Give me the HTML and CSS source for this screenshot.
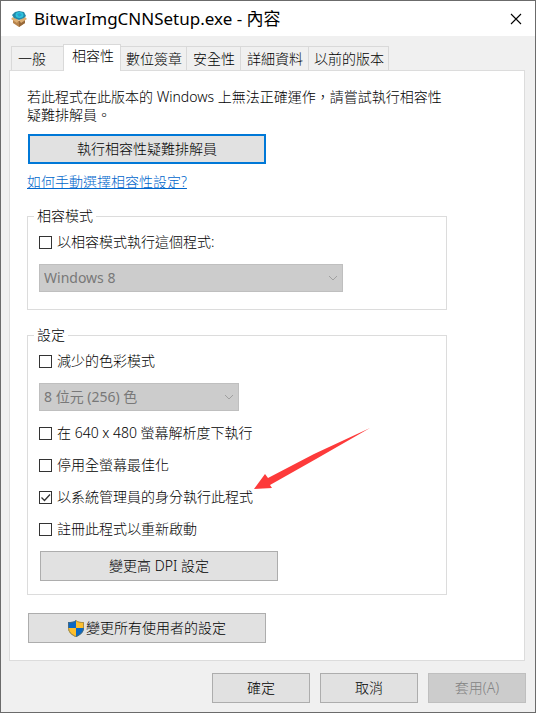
FILE: index.html
```html
<!DOCTYPE html>
<html lang="zh-Hant">

<head>
  <meta charset="UTF-8">
  <meta name="viewport" content="width=device-width, initial-scale=1.0">
  <title>BitwarImgCNNSetup.exe - 內容</title>
  <link rel="stylesheet" href="styles.css">
</head>

<body>
  <div class="window">
    <header class="titlebar">
      <svg class="app-icon" width="16" height="16" viewBox="0 0 16 16" aria-hidden="true">
        <path d="M2 7l6 3 6-3v5l-6 4-6-4z" fill="#b8844c" />
        <path d="M8 10l6-3v5l-6 4z" fill="#96683a" />
        <path d="M0 8l2-2 6 3-2 3zM16 8l-2-2-6 3 2 3z" fill="#dcae72" />
        <path d="M1 4l3-3 4-1 5 1 2 4-2 2-5 2-5-2z" fill="#2488a8" />
        <ellipse cx="8.500" cy="4" rx="4" ry="3" fill="#2cc4dc" />
        <path d="M6 3l3-1 2 2-3 2z" fill="#2a9fd0" />
      </svg>
      <h1>BitwarImgCNNSetup.exe - 內容</h1>
      <button class="close" type="button" aria-label="關閉">
        <svg width="12" height="12" viewBox="0 0 12 12"><path d="M1 1l10 10M11 1L1 11" fill="none" stroke="#000" stroke-width="1.1" /></svg>
      </button>
    </header>

    <nav class="tabs" role="tablist">
      <button class="tab general" type="button" role="tab">一般</button>
      <button class="tab active" type="button" role="tab" aria-selected="true">相容性</button>
      <button class="tab narrow" type="button" role="tab">數位簽章</button>
      <button class="tab" type="button" role="tab">安全性</button>
      <button class="tab" type="button" role="tab">詳細資料</button>
      <button class="tab narrow" type="button" role="tab">以前的版本</button>
    </nav>

    <main class="panel" role="tabpanel">
      <p class="intro">若此程式在此版本的 Windows 上無法正確運作，請嘗試執行相容性疑難排解員。</p>
      <button class="btn wide default" type="button">執行相容性疑難排解員</button>
      <a class="help" href="#">如何手動選擇相容性設定?</a>

      <fieldset class="group">
        <legend>相容模式</legend>
        <div class="rows">
          <label class="check"><input type="checkbox">以相容模式執行這個程式:</label>
          <div class="combo os">
            <select aria-label="相容模式" disabled><option>Windows 8</option></select>
            <svg width="10" height="6" viewBox="0 0 10 6"><path d="M1 1l4 4 4-4" /></svg>
          </div>
        </div>
      </fieldset>

      <fieldset class="group settings">
        <legend>設定</legend>
        <div class="rows">
          <label class="check"><input type="checkbox">減少的色彩模式</label>
          <div class="combo color">
            <select aria-label="色彩模式" disabled><option>8 位元 (256) 色</option></select>
            <svg width="10" height="6" viewBox="0 0 10 6"><path d="M1 1l4 4 4-4" /></svg>
          </div>
          <label class="check"><input type="checkbox">在 640 x 480 螢幕解析度下執行</label>
          <label class="check"><input type="checkbox">停用全螢幕最佳化</label>
          <label class="check"><input type="checkbox" checked>以系統管理員的身分執行此程式</label>
          <label class="check"><input type="checkbox">註冊此程式以重新啟動</label>
          <button class="btn wide" type="button">變更高 DPI 設定</button>
        </div>
        <svg class="arrow" width="118" height="64" viewBox="0 0 118 64" aria-hidden="true">
          <path d="M0 61L11 46 14 50 60 26 116 0 62 31 16 57 18 60z" fill="#fd3a3a" />
        </svg>
      </fieldset>

      <button class="btn wide shield" type="button">
        <svg width="16" height="17" viewBox="0 0 16 17" aria-hidden="true">
          <path d="M8 0C6 2 3 2 0 2v5c0 5 3 8 8 10z" fill="#0a68c4" />
          <path d="M8 0c2 2 5 2 8 2v5c0 5-3 8-8 10z" fill="#fdbf2d" />
          <path d="M0 8h8v9C3 15 0 12 0 8z" fill="#fdbf2d" />
          <path d="M8 8h8c0 4-3 7-8 9z" fill="#0a68c4" />
          <path d="M8 .6C6 2.500 3 2.500.5 2.500V7c0 5 3 7.500 7.500 9.500 4.500-2 7.500-4.500 7.500-9.500V2.500C13 2.500 10 2.500 8 .6z" fill="none" stroke="#6d6a5c" stroke-opacity=".6" />
        </svg>變更所有使用者的設定</button>
    </main>

    <footer class="actions">
      <button class="btn" type="button">確定</button>
      <button class="btn" type="button">取消</button>
      <button class="btn" type="button" disabled>套用(A)</button>
    </footer>
  </div>
</body>

</html>
```
FILE: styles.css
```css
* {
  box-sizing: border-box;
}

body {
  margin: 0;
  font-family: "Noto Sans", "Noto Sans CJK TC", sans-serif;
  font-size: 14px;
  font-weight: 300;
  line-height: 20px;
  color: #000;
}

button,
select {
  font: inherit;
  color: inherit;
}

.window {
  display: flex;
  flex-direction: column;
  min-height: 100vh;
  background: #f0f0f0;
  border: 1px solid #6b6b6b;
}

.titlebar {
  display: flex;
  align-items: center;
  height: 35px;
  padding: 0 13px 0 10px;
  background: #fff;

  h1 {
    flex-grow: 1;
    margin: 0 0 0 7px;
    font-size: 17px;
    font-weight: 400;
    line-height: 24px;
  }
}

.close {
  display: flex;
  padding: 0;
  border: 0;
  background: none;
}

.tabs {
  display: flex;
  align-items: flex-end;
  padding: 8px 10px 0;
}

.tab {
  height: 24px;
  padding: 0 5px 0 6px;
  border: 1px solid #d9d9d9;
  border-left: 0;
  border-bottom: 0;
  background: #f0f0f0;
  white-space: nowrap;

  &.general {
    width: 52px;
    border-left: 1px solid #d9d9d9;
    border-right: 0;
    text-align: left;
  }

  &.narrow {
    padding: 0 4px 0 5px;
  }

  /* covers the top border of the panel */
  &.active {
    position: relative;
    z-index: 1;
    height: 27px;
    margin-bottom: -1px;
    padding: 0 6px 4px 8px;
    border-left: 1px solid #d9d9d9;
    background: #fff;
  }
}

.panel {
  display: flex;
  flex-direction: column;
  align-items: flex-start;
  flex-grow: 1;
  margin: 0 10px 0 8px;
  padding: 17px 77px 17px 17px;
  background: #fff;
  border: 1px solid #dcdcdc;
}

.intro {
  margin: 0 0 10px;
  line-height: 18px;
}

.btn {
  display: flex;
  justify-content: center;
  align-items: center;
  width: 98px;
  height: 30px;
  padding: 0;
  background: #e1e1e1;
  border: 1px solid #adadad;

  &.wide {
    width: 238px;
    margin-left: 1px;
  }

  &.default {
    border: 2px solid #0078d7;
  }

  &.shield {
    gap: 2px;
    margin-top: 18px;
  }

  &[disabled] {
    background: #ccc;
    border-color: #bfbfbf;
    color: #838383;
  }
}

.help {
  margin-top: 8px;
  color: #0066cc;
}

.group {
  align-self: stretch;
  margin: 14px 0 0;
  padding: 6px 11px 17px;
  border: 1px solid #dcdcdc;

  legend {
    margin-left: -5px;
    padding: 0 3px;
  }

  &.settings {
    position: relative;
    margin-top: 15px;
    padding-bottom: 13px;
  }
}

.rows {
  display: flex;
  flex-direction: column;
  align-items: flex-start;
  gap: 12px;
}

.check {
  display: flex;
  align-items: center;
  gap: 5px;

  input {
    appearance: none;
    width: 13px;
    height: 13px;
    margin: 0;
    border: 1px solid #333;
    background: #fff;

    &:checked {
      background: #fff url("data:image/svg+xml,%3Csvg xmlns='http://www.w3.org/2000/svg' viewBox='0 0 11 11'%3E%3Cpath d='M1.500 5.500l3 3 5.500-6' fill='none' stroke='%23333' stroke-width='1.300'/%3E%3C/svg%3E");
    }
  }
}

.combo {
  display: grid;
  align-items: center;
  max-width: 100%;
  height: 28px;

  &.os {
    width: 304px;
  }

  &.color {
    width: 200px;
  }

  select,
  svg {
    grid-area: 1 / 1;
  }

  select {
    appearance: none;
    width: 100%;
    height: 100%;
    padding: 0 4px;
    background: #ccc;
    border: 1px solid #bfbfbf;
    border-radius: 0;
    color: #787878;
    font-weight: 400;
    opacity: 1;
  }

  svg {
    justify-self: end;
    margin-right: 5px;
    fill: none;
    stroke: #a0a0a0;
  }
}

/* pointer lying over the options */
.arrow {
  position: absolute;
  left: 226px;
  top: 83px;
}

.actions {
  display: flex;
  justify-content: flex-end;
  gap: 10px;
  padding: 12px 9px 9px;
}
```
